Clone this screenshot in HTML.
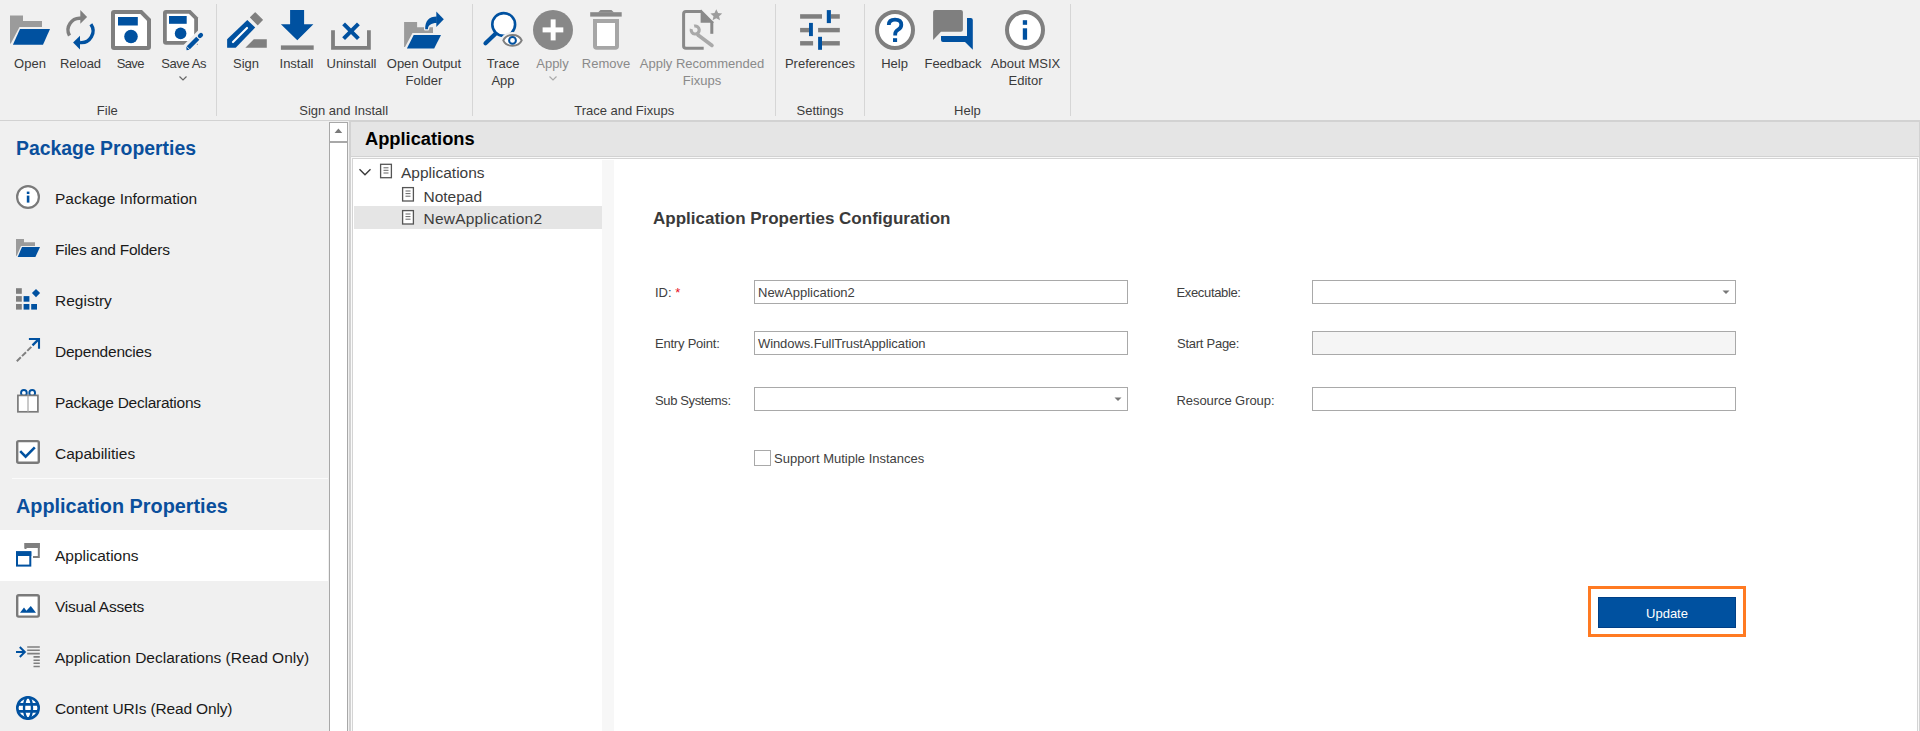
<!DOCTYPE html>
<html><head><meta charset="utf-8"><title>MSIX Editor</title>
<style>
*{margin:0;padding:0;box-sizing:border-box}
html,body{width:1920px;height:731px;overflow:hidden;background:#f0f0f0;font-family:"Liberation Sans",sans-serif}
.a{position:absolute}
.t{position:absolute;white-space:nowrap;line-height:1}
.rl{position:absolute;width:160px;text-align:center;font-size:13px;line-height:17px;color:#3a3a3a;white-space:nowrap}
.dis{color:#8a8a8a}
.gl{position:absolute;width:160px;text-align:center;font-size:13px;line-height:17px;color:#3c3c3c;white-space:nowrap}
.sep{position:absolute;top:4px;width:1px;height:112px;background:#d6d6d6}
.si{position:absolute;left:55px;font-size:15.5px;line-height:1;color:#1a1a1a;white-space:nowrap}
.sh{position:absolute;left:16px;font-size:19.5px;font-weight:bold;line-height:1;color:#0a4f9c;white-space:nowrap}
.lbl{position:absolute;font-size:13px;line-height:1;color:#404040;white-space:nowrap}
.inp{position:absolute;height:24px;border:1px solid #a9a9a9;background:#fff}
.tv{position:absolute;font-size:15.5px;line-height:1;color:#3c3c3c;white-space:nowrap}
</style></head><body>

<!-- ribbon -->
<div class="a" style="left:0;top:0;width:1920px;height:120px;background:#f0f0f0"></div>
<div class="a" style="left:0;top:120px;width:1920px;height:1px;background:#d2d2d2"></div>
<div class="sep" style="left:216px"></div>
<div class="sep" style="left:472px"></div>
<div class="sep" style="left:775px"></div>
<div class="sep" style="left:864px"></div>
<div class="sep" style="left:1070px"></div>

<div class="rl" style="left:-50px;top:55px">Open</div>
<div class="rl" style="left:0.5px;top:55px">Reload</div>
<div class="rl" style="left:50.3px;top:55px;letter-spacing:-0.6px">Save</div>
<div class="rl" style="left:103.7px;top:55px;letter-spacing:-0.42px">Save As</div>
<div class="rl" style="left:166px;top:55px">Sign</div>
<div class="rl" style="left:216.5px;top:55px">Install</div>
<div class="rl" style="left:271.5px;top:55px">Uninstall</div>
<div class="rl" style="left:344px;top:55px">Open Output<br>Folder</div>
<div class="rl" style="left:423px;top:55px">Trace<br>App</div>
<div class="rl dis" style="left:472.5px;top:55px">Apply</div>
<div class="rl dis" style="left:526px;top:55px">Remove</div>
<div class="rl dis" style="left:622px;top:55px">Apply Recommended<br>Fixups</div>
<div class="rl" style="left:740px;top:55px">Preferences</div>
<div class="rl" style="left:814.5px;top:55px">Help</div>
<div class="rl" style="left:873px;top:55px">Feedback</div>
<div class="rl" style="left:945.5px;top:55px">About MSIX<br>Editor</div>

<div class="gl" style="left:27.3px;top:102px">File</div>
<div class="gl" style="left:263.7px;top:102px">Sign and Install</div>
<div class="gl" style="left:544.2px;top:102px">Trace and Fixups</div>
<div class="gl" style="left:740px;top:102px">Settings</div>
<div class="gl" style="left:887.4px;top:102px">Help</div>

<!-- sidebar -->
<div class="a" style="left:12px;top:478px;width:316px;height:1px;background:#fbfbfb"></div>
<div class="a" style="left:0;top:530px;width:328px;height:51px;background:#fff"></div>
<div class="sh" style="top:138.7px;font-size:19.4px">Package Properties</div>
<div class="si" style="top:190.8px">Package Information</div>
<div class="si" style="top:241.8px;letter-spacing:-0.25px">Files and Folders</div>
<div class="si" style="top:292.8px">Registry</div>
<div class="si" style="top:343.8px;letter-spacing:-0.22px">Dependencies</div>
<div class="si" style="top:394.8px;letter-spacing:-0.25px">Package Declarations</div>
<div class="si" style="top:445.8px">Capabilities</div>
<div class="sh" style="top:497.2px;font-size:19.85px">Application Properties</div>
<div class="si" style="top:548.2px">Applications</div>
<div class="si" style="top:599.2px;letter-spacing:-0.22px">Visual Assets</div>
<div class="si" style="top:650.2px">Application Declarations (Read Only)</div>
<div class="si" style="top:701.2px;letter-spacing:-0.15px">Content URIs (Read Only)</div>

<!-- scrollbar -->
<div class="a" style="left:329px;top:122px;width:19px;height:609px;background:#fff;border:1px solid #a8a8a8;border-bottom:none"></div>
<div class="a" style="left:329px;top:141px;width:19px;height:2px;background:#a8a8a8"></div>
<svg class="a" style="left:0;top:0" width="1920" height="731"><path d="M334.6,133 L338.4,128.5 L342.2,133 Z" fill="#7a7a7a"/></svg>

<!-- content -->
<div class="a" style="left:349px;top:121px;width:1571px;height:610px;background:#d2d2d2"></div>
<div class="a" style="left:351px;top:122px;width:1568px;height:34px;background:#e5e5e5"></div>
<div class="a" style="left:351px;top:157px;width:1568px;height:574px;background:#f9f9f9"></div>
<div class="a" style="left:352px;top:158px;width:1566px;height:573px;background:#fff;border:1px solid #d4d4d4;border-bottom:none"></div>
<div class="a" style="left:602px;top:160px;width:12px;height:571px;background:#f7f7f7"></div>
<div class="t" style="left:365px;top:129.8px;font-size:18.3px;font-weight:bold;color:#000">Applications</div>

<!-- tree -->
<div class="a" style="left:354px;top:206px;width:248px;height:23px;background:#e5e5e5"></div>
<div class="tv" style="left:401px;top:165.3px">Applications</div>
<div class="tv" style="left:423.5px;top:188.6px">Notepad</div>
<div class="tv" style="left:423.5px;top:211.2px;letter-spacing:0.22px">NewApplication2</div>

<!-- form -->
<div class="t" style="left:653px;top:209.5px;font-size:17px;font-weight:bold;color:#3a3a3a">Application Properties Configuration</div>
<div class="lbl" style="left:655px;top:286px">ID: <span style="color:#e81123">*</span></div>
<div class="lbl" style="left:655px;top:337px;letter-spacing:-0.22px">Entry Point:</div>
<div class="lbl" style="left:655px;top:394px;letter-spacing:-0.38px">Sub Systems:</div>
<div class="lbl" style="left:1176.5px;top:285.6px;letter-spacing:-0.35px">Executable:</div>
<div class="lbl" style="left:1177px;top:336.7px;letter-spacing:-0.26px">Start Page:</div>
<div class="lbl" style="left:1176.5px;top:393.5px;letter-spacing:-0.07px">Resource Group:</div>

<div class="inp" style="left:754px;top:280px;width:374px"></div>
<div class="inp" style="left:754px;top:331px;width:374px"></div>
<div class="inp" style="left:754px;top:387px;width:374px"></div>
<div class="inp" style="left:1312px;top:280px;width:424px"></div>
<div class="inp" style="left:1312px;top:331px;width:424px;background:#f5f5f5"></div>
<div class="inp" style="left:1312px;top:387px;width:424px"></div>
<div class="lbl" style="left:758px;top:286px">NewApplication2</div>
<div class="lbl" style="left:758px;top:337px;letter-spacing:-0.09px">Windows.FullTrustApplication</div>
<div class="a" style="left:754px;top:450px;width:17px;height:16px;border:1px solid #a9a9a9;background:#fff"></div>
<div class="lbl" style="left:774px;top:452.3px">Support Mutiple Instances</div>

<div class="a" style="left:1588px;top:586px;width:158px;height:51px;border:3px solid #ff7a22"></div>
<div class="a" style="left:1598px;top:597px;width:138px;height:31px;background:#0051a0;border:1px solid #003f86"></div>
<div class="t" style="left:1598px;top:607px;width:138px;text-align:center;font-size:13px;color:#fff">Update</div>

<svg class="a" style="left:0;top:0" width="1920" height="731">
<g fill="#777"><path d="M1722.5,290.5 H1729.5 L1726,294 Z"/><path d="M1114.5,397.5 H1121.5 L1118,401 Z"/></g>
</svg>

<svg class="a" style="left:0;top:0" width="1920" height="731">
<!-- Open -->
<path d="M10,15.6 H23 V21 H42 V27 H19.5 L10.8,43.5 H10 Z" fill="#9b9b9b"/>
<path d="M20,29 H50 L43,44.7 H12.9 Z" fill="#0051a0"/>
<!-- Reload -->
<path d="M69.5,35.6 A11.7,11.7 0 0 1 81,18.3" fill="none" stroke="#7f7f7f" stroke-width="3.4"/>
<path d="M80.3,10.1 L87.1,17 L80.3,23.8 Z" fill="#7f7f7f"/>
<path d="M90.9,24.2 A11.7,11.7 0 0 1 80,42.5" fill="none" stroke="#0051a0" stroke-width="3.4"/>
<path d="M73.1,42.6 L80,35.8 L80,49.5 Z" fill="#0051a0"/>
<!-- Save -->
<path d="M114,10 H142 L151,19 V47 Q151,50 148,50 H114 Q111,50 111,47 V13 Q111,10 114,10 Z" fill="#7f7f7f"/>
<path d="M115,14 H140.3 L147,20.7 V46 H115 Z" fill="#fff"/>
<rect x="118" y="17" width="19.8" height="8.5" fill="#0051a0"/>
<circle cx="131" cy="36.5" r="6.8" fill="#0051a0"/>
<!-- Save As -->
<path d="M166,10 H190.5 L198,17.5 V44.7 H166 Q163,44.7 163,41.7 V13 Q163,10 166,10 Z" fill="#7f7f7f"/>
<path d="M166.8,13.8 H188.9 L194.2,19.1 V40.9 H166.8 Z" fill="#fff"/>
<rect x="169" y="16" width="17.7" height="7.8" fill="#0051a0"/>
<circle cx="180.6" cy="33.4" r="5.8" fill="#0051a0"/>
<path d="M184,51 L203,32" stroke="#f0f0f0" stroke-width="9"/>
<path d="M188.3,47.7 L197.8,38.2" stroke="#0051a0" stroke-width="4.4" stroke-linecap="butt"/>
<path d="M199.9,36.1 L201,35" stroke="#0051a0" stroke-width="4.2" stroke-linecap="round"/>
<path d="M186.2,46.6 L189.4,49.8 L186.6,50.2 Z" fill="#0051a0"/>
<!-- Sign -->
<path d="M227.1,39.2 L247.3,20 L255.2,27.6 L235.7,47.7 H227.1 Z" fill="#0051a0"/>
<path d="M233,42 L247,28" stroke="#fff" stroke-width="2.2" stroke-linecap="round"/>
<path d="M250.6,17.4 L255.2,12.8 L262.3,19.9 L257.7,24.5 Z" fill="#7f7f7f" stroke="#7f7f7f" stroke-width="1.2" stroke-linejoin="round"/>
<path d="M245.3,47.7 L253.8,39.2 H266.8 V47.7 Z" fill="#7f7f7f"/>
<!-- Install -->
<path d="M290.1,10.1 H304.1 V24.2 H313.4 L297.3,40.2 L280.9,24.2 H290.1 Z" fill="#0051a0"/>
<rect x="280.9" y="45.4" width="32.8" height="4.4" fill="#7f7f7f"/>
<!-- Uninstall -->
<path d="M331.1,30.3 H334.9 V46 H367 V30.3 H370.8 V49.8 H331.1 Z" fill="#7f7f7f"/>
<path d="M343.6,23.9 L358.4,38.7 M358.4,23.9 L343.6,38.7" stroke="#0051a0" stroke-width="4"/>
<!-- Open Output Folder -->
<path d="M404.1,22.1 H417.1 V27.2 H433 V33 H412.5 L405,47 H404.1 Z" fill="#9b9b9b"/>
<path d="M413.7,35.1 H441 L434.2,48.4 H406.9 Z" fill="#0051a0"/>
<path d="M425.2,29.2 C425,21 429,16.6 436.8,16.6 L436.8,23.1 C431,23.1 428,25.5 427.9,29.2 Z" fill="#f0f0f0" stroke="#f0f0f0" stroke-width="2.4" stroke-linejoin="round"/>
<path d="M425.2,29.2 C425,21 429,16.6 436.8,16.6 L436.8,23.1 C431,23.1 428,25.5 427.9,29.2 Z" fill="#0051a0"/>
<path d="M436.3,11.5 L443.8,19.2 L436.3,26.9 Z" fill="#0051a0"/>
<!-- Trace App -->
<circle cx="503.7" cy="24.5" r="11.4" fill="#fff" stroke="#0051a0" stroke-width="2.6"/>
<path d="M485.5,43.2 L495.5,33.8" stroke="#0051a0" stroke-width="4.2" stroke-linecap="round"/>
<path d="M503.3,40.4 C506.5,33.2 518.5,33.2 521.7,40.4 C518.5,47.6 506.5,47.6 503.3,40.4 Z" fill="#f0f0f0" stroke="#f0f0f0" stroke-width="6"/>
<path d="M503.3,40.4 C506.5,33.2 518.5,33.2 521.7,40.4 C518.5,47.6 506.5,47.6 503.3,40.4 Z" fill="#fff" stroke="#7f7f7f" stroke-width="2"/>
<circle cx="512.5" cy="40.4" r="3.4" fill="#fff" stroke="#0051a0" stroke-width="2"/>
<!-- Apply -->
<circle cx="553" cy="30" r="20" fill="#888"/>
<rect x="542.6" y="27.4" width="20.7" height="5" fill="#fff"/>
<rect x="550.7" y="19.4" width="4.9" height="21" fill="#fff"/>
<!-- Remove -->
<rect x="590.2" y="12.2" width="31.5" height="4.4" fill="#898989"/>
<path d="M598,12.5 L600.5,10.1 H611.5 L614,12.5 Z" fill="#898989"/>
<path d="M593,19 H619 V46 Q619,49.8 615.2,49.8 H596.8 Q593,49.8 593,46 Z" fill="#a6a6a6"/>
<rect x="597" y="23" width="18" height="23" fill="#fff"/>
<!-- Fixups -->
<path d="M702,11.6 H686 Q683.6,11.6 683.6,14 V46 Q683.6,48.3 686,48.3 H703.7" fill="none" stroke="#898989" stroke-width="3"/>
<path d="M700.6,10.1 L713.3,22.8 H700.6 Z" fill="#898989"/>
<path d="M700.6,10.1 L713.3,22.8" stroke="#898989" stroke-width="1.5"/>
<rect x="710.3" y="21.5" width="3" height="12.3" fill="#898989"/>
<path d="M698,35 L712,45.5" stroke="#a9a9a9" stroke-width="3.6" stroke-linecap="round"/>
<path d="M694.17,26.14 A4,4 0 1 1 691.34,28.97" fill="none" stroke="#a9a9a9" stroke-width="3.2"/>
<path d="M716.3,9.3 L718.1,13.1 L722.2,13.5 L719.1,16.3 L720,20.3 L716.3,18.2 L712.6,20.3 L713.5,16.3 L710.4,13.5 L714.5,13.1 Z" fill="#9c9c9c"/>
<!-- Preferences -->
<g fill="#7f7f7f">
<rect x="800.1" y="14.2" width="21.9" height="4.5"/><rect x="830.9" y="14.2" width="8.9" height="4.5"/>
<rect x="800.1" y="27.9" width="8.9" height="4.4"/><rect x="818.1" y="27.9" width="21.7" height="4.4"/>
<rect x="800.1" y="41.1" width="13" height="4.4"/><rect x="822" y="41.1" width="17.8" height="4.4"/>
</g>
<g fill="#0051a0">
<rect x="826.8" y="10.1" width="4.1" height="13"/>
<rect x="809" y="22.9" width="3.9" height="13.2"/>
<rect x="818.1" y="36.8" width="3.9" height="13"/>
</g>
<!-- Help -->
<circle cx="895" cy="30" r="18" fill="#fff" stroke="#7f7f7f" stroke-width="4"/>
<path d="M888.8,25 Q888.8,19.6 895,19.6 Q901.3,19.6 901.3,24.8 Q901.3,27.8 898.2,29.6 Q895.2,31.4 895.2,34 V35.5" fill="none" stroke="#0051a0" stroke-width="3.8"/>
<rect x="893" y="38.2" width="4.1" height="3.8" fill="#0051a0"/>
<!-- Feedback -->
<path d="M935.1,10.1 H960.9 Q962.9,10.1 962.9,12.1 V29.7 Q962.9,31.7 960.9,31.7 H941 L933.1,39.9 V12.1 Q933.1,10.1 935.1,10.1 Z" fill="#7f7f7f"/>
<path d="M967,18 H970.8 Q972.8,18 972.8,20 V49.8 L965,42 H943 Q941,42 941,40 V36.1 H967 Z" fill="#0051a0"/>
<!-- About -->
<circle cx="1025" cy="30" r="18" fill="#fff" stroke="#7f7f7f" stroke-width="4"/>
<rect x="1022.8" y="20.2" width="4.3" height="4.6" fill="#0051a0"/>
<rect x="1022.8" y="28.3" width="4.3" height="11.4" fill="#0051a0"/>
<!-- chevrons -->
<path d="M179.5,76.5 L183,80 L186.5,76.5" fill="none" stroke="#666" stroke-width="1.2"/>
<path d="M549.5,76.5 L553,80 L556.5,76.5" fill="none" stroke="#aaa" stroke-width="1.2"/>

<!-- Sidebar icons -->
<circle cx="28" cy="197" r="10.9" fill="#fff" stroke="#7a7a7a" stroke-width="2.2"/>
<rect x="26.8" y="191.6" width="2.6" height="2.4" fill="#0051a0"/>
<rect x="26.8" y="195.6" width="2.6" height="7" fill="#0051a0"/>

<path d="M16,239 H24 V242.3 H35 V246 H21 L16.8,255.8 H16 Z" fill="#9b9b9b"/>
<path d="M22,247 H40 L35.4,257 H17.7 Z" fill="#0051a0"/>

<g fill="#7f7f7f"><rect x="16" y="288.2" width="5.8" height="5.6"/><rect x="16" y="296.1" width="5.8" height="5.6"/><rect x="16" y="304" width="5.8" height="5.6"/></g>
<g fill="#0051a0"><rect x="23.6" y="296.1" width="5.8" height="5.6"/><rect x="23.6" y="304" width="5.8" height="5.6"/><rect x="31.2" y="304" width="5.8" height="5.6"/>
<path d="M36,289 L40.1,293.1 L36,297.2 L31.9,293.1 Z"/></g>

<path d="M16.8,361.2 L20.8,357.3 M22,356.1 L26,352.2 M27.3,350.9 L31.3,346.9" stroke="#7f7f7f" stroke-width="2"/>
<path d="M32.5,345.4 L38.5,339.4" stroke="#0051a0" stroke-width="2.3"/>
<path d="M28.9,339 H39 V348.8" fill="none" stroke="#0051a0" stroke-width="2.1"/>

<circle cx="23.9" cy="392.9" r="2.85" fill="#fff" stroke="#0051a0" stroke-width="1.9"/><circle cx="32.2" cy="392.9" r="2.85" fill="#fff" stroke="#0051a0" stroke-width="1.9"/>
<rect x="17.9" y="395.4" width="20" height="16.4" fill="#fff" stroke="#7a7a7a" stroke-width="1.7"/>
<rect x="27.4" y="395.4" width="1.2" height="16.4" fill="#a8a8a8"/>

<rect x="17.2" y="441.1" width="21.6" height="21.6" rx="1.5" fill="#fff" stroke="#7a7a7a" stroke-width="2.4"/>
<path d="M20.2,451.2 L25.6,456.6 L34.8,447.4" fill="none" stroke="#0051a0" stroke-width="2.6"/>

<path d="M25.5,549 V544 H38.8 V557 H33" fill="none" stroke="#7f7f7f" stroke-width="2"/>
<rect x="24.5" y="543" width="15.3" height="5" fill="#7f7f7f"/>
<rect x="17" y="552.3" width="13.3" height="13.3" fill="#fff" stroke="#0051a0" stroke-width="2"/>
<rect x="16" y="551.3" width="15.3" height="4.7" fill="#0051a0"/>

<rect x="17.2" y="595.2" width="21.6" height="21.4" rx="1.5" fill="#fff" stroke="#7a7a7a" stroke-width="2.4"/>
<path d="M20,612.7 L24,607.5 L26.4,610.8 L30.8,605.9 L36,612.7 Z" fill="#0051a0"/>

<path d="M16,652 H24.3" stroke="#0051a0" stroke-width="2"/>
<path d="M19.8,647 L24.8,652 L19.8,657" fill="none" stroke="#0051a0" stroke-width="2"/>
<g stroke="#7f7f7f" stroke-width="1.6"><path d="M27.2,647 H39.8 M27.2,650.3 H39.8 M27.2,653.6 H39.8 M33.5,656.9 H39.8 M33.5,660.2 H39.8 M33.5,663.3 H39.8 M33.5,666.5 H39.8"/></g>

<circle cx="28" cy="707.9" r="10.7" fill="#fff" stroke="#0051a0" stroke-width="2.6"/>
<ellipse cx="28" cy="707.9" rx="4" ry="10.8" fill="none" stroke="#0051a0" stroke-width="2.4"/>
<path d="M17,704.3 H39 M17,711.4 H39" stroke="#0051a0" stroke-width="2.7"/>

<!-- tree icons -->
<path d="M359.5,169.2 L365,174.7 L370.5,169.2" fill="none" stroke="#3a3a3a" stroke-width="1.4"/>
<g fill="#fff" stroke="#555" stroke-width="1.3">
<rect x="380.6" y="164.3" width="10.8" height="13.4"/>
<rect x="402.6" y="187.6" width="10.8" height="13.4"/>
<rect x="402.6" y="210.6" width="10.8" height="13.4"/>
</g>
<g stroke="#666" stroke-width="1"><path d="M383.5,167.8 H388.5 M383.5,170.3 H388.5 M383.5,173 H388.5 M405.5,191 H410.5 M405.5,193.6 H410.5 M405.5,196.2 H410.5 M405.5,214 H410.5 M405.5,216.6 H410.5 M405.5,219.2 H410.5"/></g>
</svg>

</body></html>
